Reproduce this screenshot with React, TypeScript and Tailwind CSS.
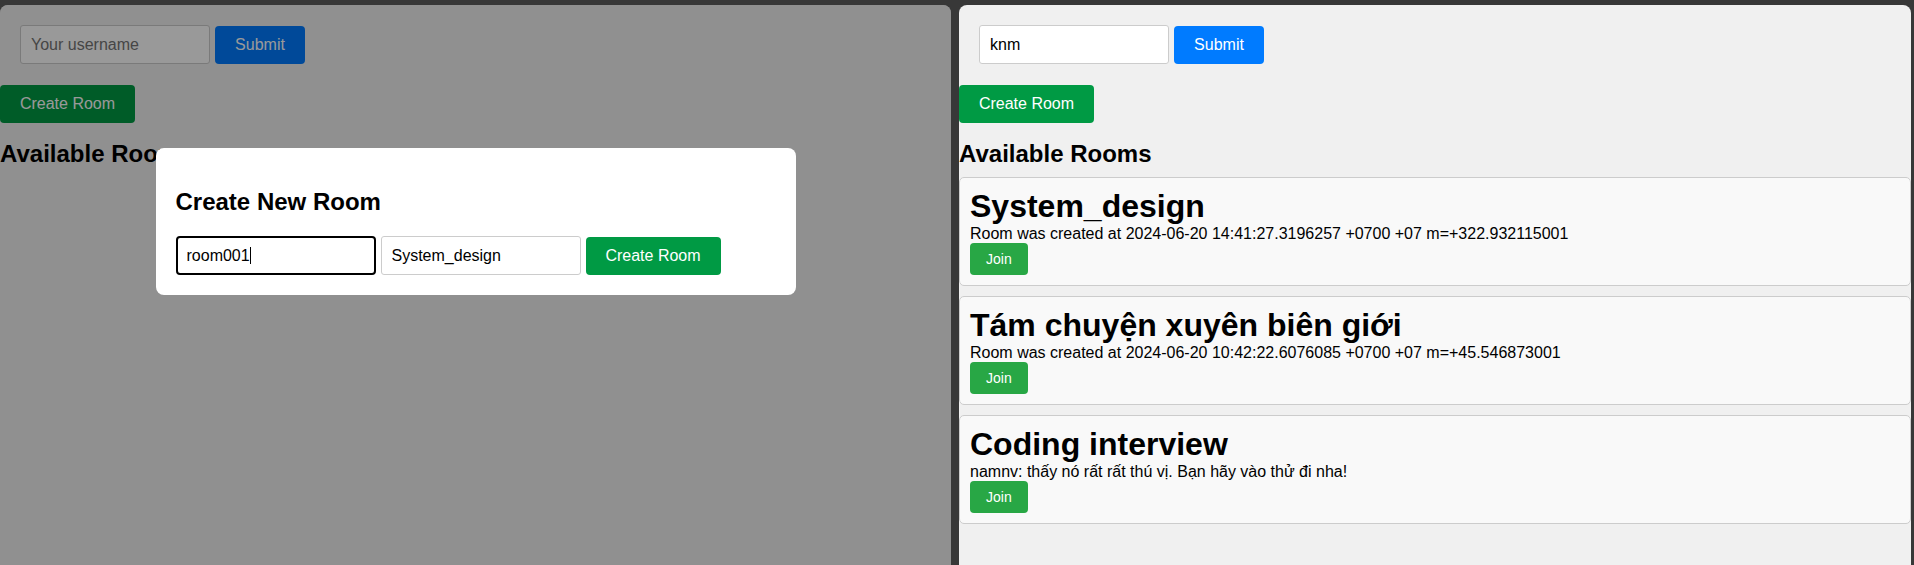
import React from "react";

type Room = {
  name: string;
  description: string;
};

const rooms: Room[] = [
  {
    name: "System_design",
    description:
      "Room was created at 2024-06-20 14:41:27.3196257 +0700 +07 m=+322.932115001",
  },
  {
    name: "Tám chuyện xuyên biên giới",
    description:
      "Room was created at 2024-06-20 10:42:22.6076085 +0700 +07 m=+45.546873001",
  },
  {
    name: "Coding interview",
    description: "namnv: thấy nó rất rất thú vị. Bạn hãy vào thử đi nha!",
  },
];

function CreateRoomButton() {
  return (
    <button className="block h-[38px] w-[135px] shrink-0 rounded-[4px] bg-[#009a44] text-base text-white">
      Create Room
    </button>
  );
}

function UsernameForm({ username }: { username?: string }) {
  return (
    <div className="flex items-center gap-[5px] px-5 pt-5 pb-[21px]">
      <input
        type="text"
        placeholder="Your username"
        defaultValue={username}
        className="h-[39px] w-[190px] rounded-[3px] border border-[#ccc] bg-white px-[10px] text-base text-black outline-none placeholder:text-[#757575]"
      />
      <button className="h-[38px] w-[90px] rounded-[4px] bg-[#007bff] text-base text-white">
        Submit
      </button>
    </div>
  );
}

function RoomCard({ room }: { room: Room }) {
  return (
    <div className="rounded-[5px] border border-[#ccc] bg-[#f9f9f9] p-[10px]">
      <h1 className="text-[32px] font-bold leading-[normal]">{room.name}</h1>
      <p className="text-base leading-[normal]">{room.description}</p>
      <button className="block h-8 rounded-[4px] bg-[#28a745] px-4 text-sm leading-[normal] text-white">
        Join
      </button>
    </div>
  );
}

function CreateRoomModal() {
  return (
    <div className="absolute inset-0 flex items-start justify-center bg-black/40 pt-[143px]">
      <div className="w-[640px] rounded-lg bg-white p-5">
        <h2 className="my-5 text-[24px] font-bold leading-[normal]">
          Create New Room
        </h2>
        <div className="flex items-center gap-[5px]">
          <div className="relative">
            <input
              type="text"
              defaultValue="room001"
              className="h-[39px] w-[200px] rounded-[4px] border-2 border-black bg-white px-[9px] text-base text-black outline-none"
            />
            {/* text caret */}
            <span className="absolute left-[74px] top-[11px] h-[17px] w-px bg-black" />
          </div>
          <input
            type="text"
            defaultValue="System_design"
            className="h-[39px] w-[200px] rounded-[3px] border border-[#ccc] bg-white px-[10px] text-base text-black outline-none"
          />
          <CreateRoomButton />
        </div>
      </div>
    </div>
  );
}

function RoomPanel({
  username,
  roomList,
  showModal = false,
  className = "",
}: {
  username?: string;
  roomList: Room[];
  showModal?: boolean;
  className?: string;
}) {
  return (
    <div
      className={`relative h-[560px] overflow-hidden rounded-t-lg bg-[#f0f0f0] text-black ${className}`}
    >
      <UsernameForm username={username} />
      <CreateRoomButton />
      <h2 className="mt-[17px] mb-[9px] text-[24px] font-bold leading-[normal]">
        Available Rooms
      </h2>
      <div className="flex flex-col gap-[10px]">
        {roomList.map((room) => (
          <RoomCard key={room.name} room={room} />
        ))}
      </div>
      {showModal && <CreateRoomModal />}
    </div>
  );
}

export default function App() {
  return (
    <div className="flex h-[565px] gap-2 overflow-hidden bg-[#383838] pt-[5px] pr-[3px] font-['Liberation_Sans',Arial,sans-serif] leading-[normal]">
      <RoomPanel roomList={[]} showModal className="w-[951px] shrink-0" />
      <RoomPanel username="knm" roomList={rooms} className="w-[952px] shrink-0" />
    </div>
  );
}
